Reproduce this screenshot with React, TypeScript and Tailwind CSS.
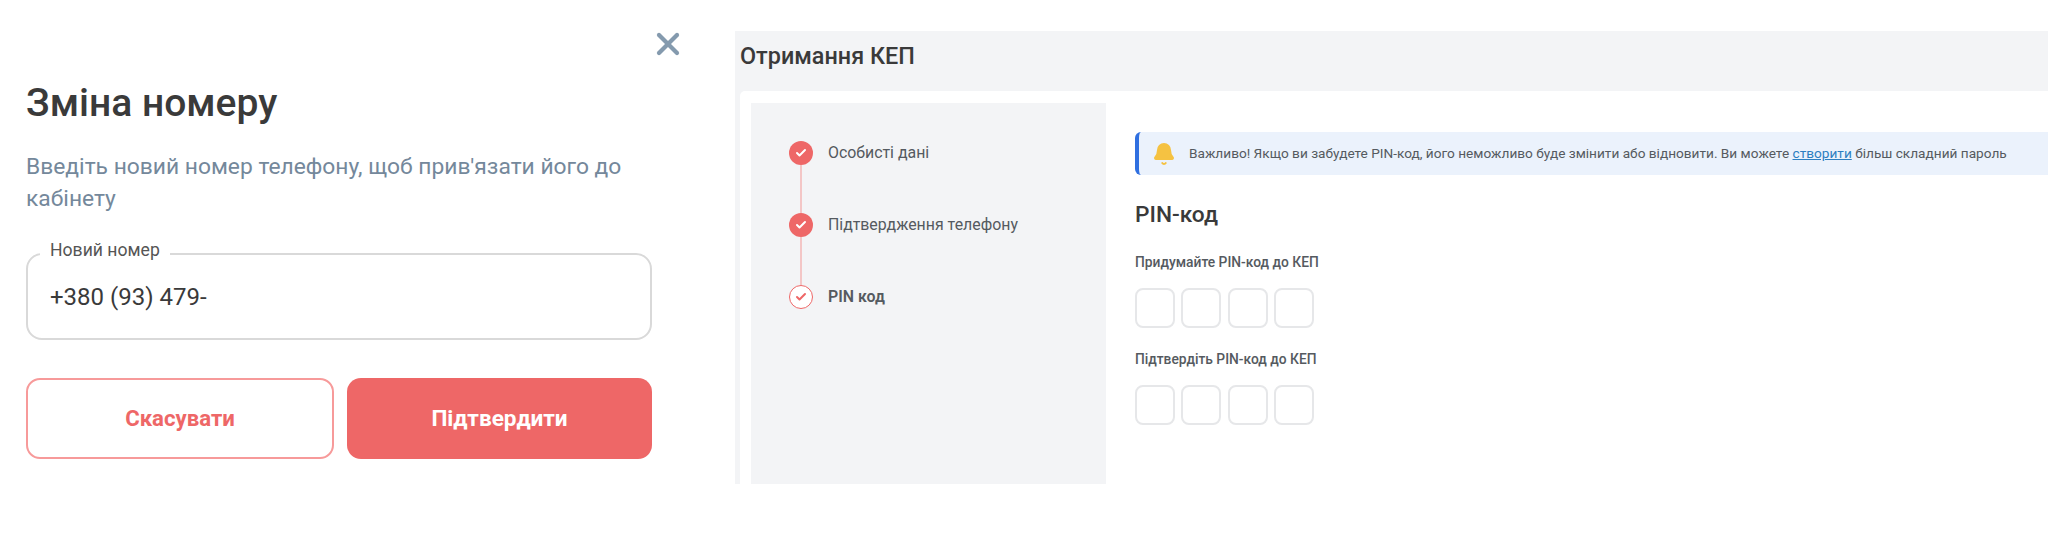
import { X, Check, Bell } from "lucide-react";

const steps = [
    { label: "Особисті дані", done: true },
    { label: "Підтвердження телефону", done: true },
    { label: "PIN код", done: false },
];

function PinBoxes() {
    return (
        <div className="flex gap-[6.4px]">
            {[0, 1, 2, 3].map((i) => (
                <div key={i} className="w-[40px] h-[40px] rounded-[8px] border-2 border-[#e6e7e9] bg-white" />
            ))}
        </div>
    );
}

function PhoneDialog() {
    return (
        <div className="w-[735px] shrink-0 pl-[26px]">
            <div className="w-[660px] flex justify-end pt-[26px] h-[71px]">
                <X className="text-[#849aae]" size={36} strokeWidth={2.8} />
            </div>
            <h1 className="text-[39px] leading-[44px] font-medium text-[#3a3a3a] mt-[10px]">Зміна номеру</h1>
            <p className="w-[630px] text-[22.8px] leading-[32px] text-[#74889b] mt-[26px]">
                Введіть новий номер телефону, щоб прив'язати його до кабінету
            </p>
            <div className="relative w-[626px] h-[87px] mt-[38px] rounded-[16px] border-2 border-[#d9d9d9] flex items-center pl-[22px]">
                <span className="absolute -top-[16px] left-[12px] bg-white px-[10px] text-[17.6px] leading-[22px] text-[#555555]">
                    Новий номер
                </span>
                <span className="text-[24px] text-[#3a3a3a]">+380 (93) 479-</span>
            </div>
            <div className="flex gap-[13px] w-[626px] mt-[38px]">
                <button className="w-[308px] h-[81px] rounded-[14px] border-2 border-[#f79a9a] bg-white text-[#ee6767] text-[22.2px] font-bold">
                    Скасувати
                </button>
                <button className="flex-1 h-[81px] rounded-[14px] bg-[#ee6767] text-white text-[22.6px] font-bold">
                    Підтвердити
                </button>
            </div>
        </div>
    );
}

function Stepper() {
    return (
        <div className="w-[355px] shrink-0 bg-[#f3f4f6] pt-[38px] pl-[38px]">
            {steps.map((step, i) => (
                <div key={step.label} className="relative flex items-center gap-[15px] h-[24px] mb-[48px]">
                    {i < steps.length - 1 && (
                        <div className="absolute left-[11px] top-[24px] w-[2px] h-[48px] bg-[#f3c6c6]" />
                    )}
                    <div
                        className={`w-[24px] h-[24px] rounded-full flex items-center justify-center ${
                            step.done ? "bg-[#ee6767]" : "bg-white border border-[#ee6767]"
                        }`}
                    >
                        <Check size={12} strokeWidth={4} className={step.done ? "text-white" : "text-[#ee6767]"} />
                    </div>
                    <span className={`text-[15.9px] text-[#555a60] ${step.done ? "" : "font-semibold"}`}>{step.label}</span>
                </div>
            ))}
        </div>
    );
}

function KepPanel() {
    return (
        <div className="flex-1 h-[453px] mt-[31px] bg-[#f3f4f6] pl-[5px] flex flex-col overflow-hidden">
            <div className="h-[60px] flex items-center">
                <h2 className="text-[23.4px] font-medium text-[#3a3a3a] -mt-[8px]">Отримання КЕП</h2>
            </div>
            <div className="flex-1 bg-white rounded-tl-[5px] pt-[12px] pl-[11px] flex">
                <Stepper />
                <div className="pl-[29px] pt-[29px] flex-1 min-w-0">
                    <div className="h-[43px] bg-[#ebf2fc] border-l-[4px] border-[#2f6fe0] rounded-l-[6px] flex items-center pl-[13px] gap-[13px] whitespace-nowrap">
                        <Bell size={24} className="text-[#f5c242] fill-[#f5c242]" />
                        <span className="text-[13.65px] text-[#555a60]">
                            Важливо! Якщо ви забудете PIN-код, його неможливо буде змінити або відновити. Ви можете{" "}
                            <span className="text-[#2d7fc1] underline">створити</span> більш складний пароль
                        </span>
                    </div>
                    <h3 className="text-[22.7px] font-medium text-[#3a3a3a] mt-[26px] leading-[28px]">PIN-код</h3>
                    <p className="text-[13.8px] font-medium text-[#555a60] mt-[24px] leading-[18px]">Придумайте PIN-код до КЕП</p>
                    <div className="mt-[17px]">
                        <PinBoxes />
                    </div>
                    <p className="text-[13.8px] font-medium text-[#555a60] mt-[22px] leading-[18px]">Підтвердіть PIN-код до КЕП</p>
                    <div className="mt-[17px]">
                        <PinBoxes />
                    </div>
                </div>
            </div>
        </div>
    );
}

export default function App() {
    return (
        <div className="w-[2048px] h-[543px] bg-white flex items-start overflow-hidden font-['Roboto',sans-serif]">
            <PhoneDialog />
            <KepPanel />
        </div>
    );
}
